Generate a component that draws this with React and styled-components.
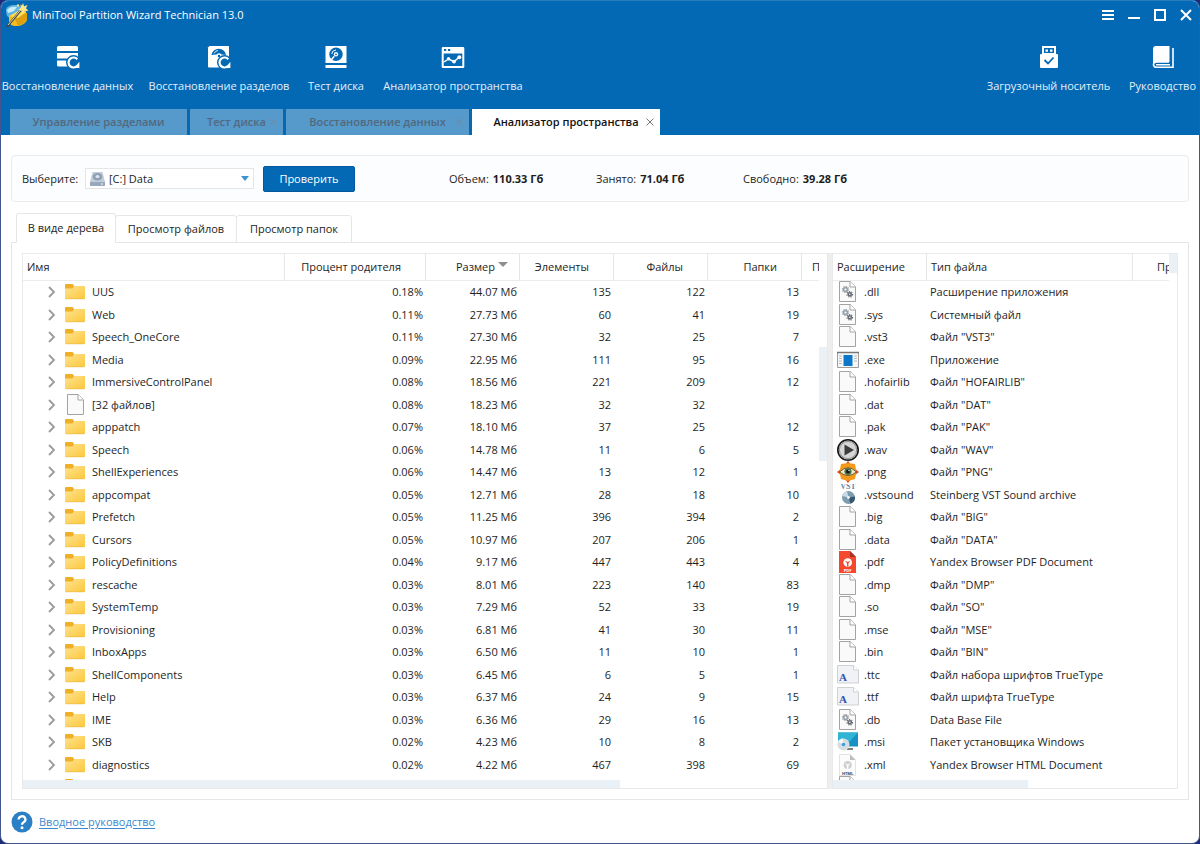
import React, { useState } from 'react';
import styled, { createGlobalStyle } from 'styled-components';

const GlobalStyle = createGlobalStyle`
  * {
    box-sizing: border-box;
  }

  body {
    margin: 0;
    background: #1c2a78;
    font-family: 'Open Sans', 'Noto Sans', sans-serif;
    font-size: 11px;
    line-height: 16px;
    color: #1e1e1e;
  }

  button, select {
    font: inherit;
    color: inherit;
    margin: 0;
    padding: 0;
    border: 0;
    background: none;
  }
`;

const Window = styled.div`
  display: flex;
  flex-direction: column;
  height: 100vh;
  border: 1px solid #45558f;
  border-top-color: #2a7cbd;
  border-radius: 8px;
  background: #fff;
  overflow: hidden;
`;

const Header = styled.header`
  background: #0469b5;
  color: #fff;
`;

const TitleBar = styled.div`
  display: flex;
  align-items: center;
  justify-content: space-between;
  height: 28px;
  padding: 0 6px 0 4px;
`;

const AppName = styled.h1`
  display: flex;
  align-items: center;
  gap: 3px;
  margin: 0;
  font-size: 11px;
  font-weight: 400;
`;

const WindowControls = styled.div`
  display: flex;
  gap: 12px;
`;

const ControlButton = styled.button`
  width: 14px;
  height: 14px;

  svg {
    display: block;
  }
`;

const Toolbar = styled.div`
  display: flex;
  justify-content: space-between;
  padding: 16px 4px 0;
  height: 80px;
`;

const ToolGroup = styled.div`
  display: flex;
  gap: 22px;
`;

const ToolButton = styled.button`
  display: flex;
  flex-direction: column;
  align-items: center;
  gap: 9px;
  width: ${props => props.$width}px;
  height: 49px;
  color: #e2effa;
  white-space: nowrap;

  svg {
    flex: none;
  }
`;

const TabBar = styled.div`
  display: flex;
  gap: 3px;
  padding: 0 9px;
`;

const Tab = styled.div`
  display: grid;
  grid-template-columns: 14px 1fr 14px;
  align-items: center;
  width: ${props => props.$width}px;
  height: 26px;
  background: ${props => (props.$active ? '#fff' : '#5699cb')};
  color: ${props => (props.$active ? '#111' : '#52697d')};
`;

const TabLabel = styled.button`
  grid-column: 2;
  font-weight: 600;
  white-space: nowrap;
`;

const TabClose = styled.button`
  width: 8px;
  height: 8px;
  color: ${props => (props.$active ? '#777' : '#6f8ba3')};

  svg {
    display: block;
  }
`;

const Main = styled.main`
  flex: 1;
  display: flex;
  flex-direction: column;
  min-height: 0;
  padding: 20px 10px 0;
`;

const DrivePanel = styled.form`
  display: flex;
  align-items: center;
  height: 47px;
  padding: 0 10px;
  border: 1px solid #e9ebec;
  border-radius: 4px;
  background: #fbfdfe;
`;

const DriveLabel = styled.label`
  width: 63px;
`;

const SelectBox = styled.div`
  display: flex;
  align-items: center;
  gap: 4px;
  width: 169px;
  height: 21px;
  margin-right: 9px;
  padding: 0 4px;
  border: 1px solid #e3e6e8;
  background: #fff;
`;

const DriveSelect = styled.select`
  flex: 1;
  appearance: none;
  outline: 0;
`;

const ScanButton = styled.button`
  width: 92px;
  height: 26px;
  border: 1px solid #02589b;
  border-radius: 2px;
  background: #0469b5;
  color: #fff;
`;

const Stats = styled.dl`
  display: flex;
  margin: 0 0 0 94px;
`;

const Stat = styled.div`
  display: flex;
  gap: 4px;
  width: 147px;

  dd {
    margin: 0;
    font-weight: 700;
  }
`;

const ViewTabs = styled.div`
  display: flex;
  align-items: flex-end;
  height: 30px;
  margin: 11px 0 -1px 5px;
  z-index: 1;
`;

const ViewTab = styled.button`
  width: ${props => props.$width}px;
  height: ${props => (props.$active ? 30 : 28)}px;
  margin-left: ${props => (props.$first ? 0 : -1)}px;
  padding-bottom: ${props => (props.$active ? 1 : 0)}px;
  border: 1px solid #e6e6e6;
  border-bottom-color: ${props => (props.$active ? '#fff' : '#e6e6e6')};
  border-radius: 3px 3px 0 0;
  background: #fff;
`;

const ViewPanel = styled.section`
  flex: 1;
  display: flex;
  min-height: 0;
  padding: 10px;
  border: 1px solid #e6e6e6;
`;

const Splitter = styled.div`
  width: 4px;
  background: #eee;
`;

const Pane = styled.div`
  flex: ${props => (props.$fixed ? `0 0 ${props.$fixed}px` : '1')};
  display: grid;
  grid-template-columns: minmax(0, 1fr) 8px;
  grid-template-rows: minmax(0, 1fr) 8px;
  min-width: 0;
  border: 1px solid #e9e9e9;
`;

const PaneBody = styled.div`
  overflow: hidden;
`;

const VerticalTrack = styled.div`
  padding-top: ${props => props.$offset}px;
`;

const VerticalThumb = styled.div`
  height: ${props => props.$size}px;
  background: #e9f0f6;
`;

const HorizontalThumb = styled.div`
  width: ${props => props.$size}%;
  background: #e9f0f6;
`;

const Table = styled.table`
  width: 100%;
  table-layout: fixed;
  border-collapse: separate;
  border-spacing: 0;
`;

const HeadCell = styled.th`
  width: ${props => (props.$width ? `${props.$width}px` : 'auto')};
  height: 27px;
  padding: ${props => (props.$numeric ? '0 24px 0 0' : `0 0 0 ${props.$indent || 4}px`)};
  border-bottom: 1px solid #ececec;
  border-left: ${props => (props.$first ? '0' : '1px solid #e6e6e6')};
  font-weight: 400;
  text-align: ${props => (props.$numeric ? 'right' : 'left')};
  white-space: nowrap;
  overflow: hidden;
`;

const HeadText = styled.span`
  display: inline-flex;
  gap: 3px;
`;

const SortMark = styled.svg`
  width: 10px;
  height: 10px;
  margin-right: -13px;
`;

const Row = styled.tr`
  height: 23px;

  &:nth-child(even) {
    height: 22px;
  }
`;

const Cell = styled.td`
  padding: 0 ${props => (props.$numeric ? 2 : 0)}px 0 ${props => props.$indent || 0}px;
  text-align: ${props => (props.$numeric ? 'right' : 'left')};
  vertical-align: top;
  line-height: 22px;
  white-space: nowrap;
`;

const NameContent = styled.div`
  display: flex;
  align-items: center;
  gap: 5px;
  height: 22px;

  svg {
    display: block;
    flex: none;
  }
`;

const Expander = styled.button`
  width: 12px;
  height: 12px;
`;

const Footer = styled.footer`
  display: flex;
  align-items: center;
  gap: 6px;
  height: 43px;
  padding-left: 10px;
`;

const GuideLink = styled.a`
  color: #3b88cf;
  text-decoration: underline;
  text-underline-offset: 2px;
`;

const folders = [
  ['UUS', '0.18%', '44.07 Мб', '135', '122', '13'],
  ['Web', '0.11%', '27.73 Мб', '60', '41', '19'],
  ['Speech_OneCore', '0.11%', '27.30 Мб', '32', '25', '7'],
  ['Media', '0.09%', '22.95 Мб', '111', '95', '16'],
  ['ImmersiveControlPanel', '0.08%', '18.56 Мб', '221', '209', '12'],
  ['[32 файлов]', '0.08%', '18.23 Мб', '32', '32', ''],
  ['apppatch', '0.07%', '18.10 Мб', '37', '25', '12'],
  ['Speech', '0.06%', '14.78 Мб', '11', '6', '5'],
  ['ShellExperiences', '0.06%', '14.47 Мб', '13', '12', '1'],
  ['appcompat', '0.05%', '12.71 Мб', '28', '18', '10'],
  ['Prefetch', '0.05%', '11.25 Мб', '396', '394', '2'],
  ['Cursors', '0.05%', '10.97 Мб', '207', '206', '1'],
  ['PolicyDefinitions', '0.04%', '9.17 Мб', '447', '443', '4'],
  ['rescache', '0.03%', '8.01 Мб', '223', '140', '83'],
  ['SystemTemp', '0.03%', '7.29 Мб', '52', '33', '19'],
  ['Provisioning', '0.03%', '6.81 Мб', '41', '30', '11'],
  ['InboxApps', '0.03%', '6.50 Мб', '11', '10', '1'],
  ['ShellComponents', '0.03%', '6.45 Мб', '6', '5', '1'],
  ['Help', '0.03%', '6.37 Мб', '24', '9', '15'],
  ['IME', '0.03%', '6.36 Мб', '29', '16', '13'],
  ['SKB', '0.02%', '4.23 Мб', '10', '8', '2'],
  ['diagnostics', '0.02%', '4.22 Мб', '467', '398', '69'],
  ['', '', '', '', '', ''],
];

const fileTypes = [
  ['gears', '.dll', 'Расширение приложения'],
  ['gears', '.sys', 'Системный файл'],
  ['blank', '.vst3', 'Файл "VST3"'],
  ['exe', '.exe', 'Приложение'],
  ['blank', '.hofairlib', 'Файл "HOFAIRLIB"'],
  ['blank', '.dat', 'Файл "DAT"'],
  ['blank', '.pak', 'Файл "PAK"'],
  ['play', '.wav', 'Файл "WAV"'],
  ['eye', '.png', 'Файл "PNG"'],
  ['vst', '.vstsound', 'Steinberg VST Sound archive'],
  ['blank', '.big', 'Файл "BIG"'],
  ['blank', '.data', 'Файл "DATA"'],
  ['pdf', '.pdf', 'Yandex Browser PDF Document'],
  ['blank', '.dmp', 'Файл "DMP"'],
  ['blank', '.so', 'Файл "SO"'],
  ['blank', '.mse', 'Файл "MSE"'],
  ['blank', '.bin', 'Файл "BIN"'],
  ['font', '.ttc', 'Файл набора шрифтов TrueType'],
  ['font', '.ttf', 'Файл шрифта TrueType'],
  ['gears', '.db', 'Data Base File'],
  ['msi', '.msi', 'Пакет установщика Windows'],
  ['html', '.xml', 'Yandex Browser HTML Document'],
  ['blank', '', ''],
];

function Logo() {
  return (
    <svg width="24" height="24" viewBox="0 0 24 24">
      <path d="M1 7c0-3 4-5 9-5 4 0 7 2 7 4l-5 8H3q-2-2-2-7z" fill="#5fb4e6" />
      <path d="M2 7c2-3 6-4 10-3l-3 4-6 2z" fill="#c9ecfb" />
      <path d="M4 13l8-4 9-1 1 9c-2 4-6 6-11 6-4 0-7-2-7-4z" fill="#f2bd1d" />
      <path d="M9 14l13-4v7c-2 3-5 5-9 5.500z" fill="#dfa010" />
      <path d="M5 13l8-5 8 1-8 6z" fill="#fbe15a" />
      <path d="M2.500 23L16 7" stroke="#4a4438" strokeWidth="2.200" strokeLinecap="round" />
      <path d="M3 22L16 6.500" stroke="#e9e4d4" strokeWidth=".9" />
      <path d="M18 0l1.100 3.200L22.500 2 21 5.200l2.500 2.600-3.700.2L18 11l-1.500-3.300L13 7l2.800-2.200L15.500 1.500 17 2.500z" fill="#fbe588" />
      <circle cx="13" cy="2.500" r="1.200" fill="#f7e27c" />
    </svg>
  );
}

function RefreshBadge() {
  return (
    <g>
      <circle cx="17.500" cy="17.500" r="7.500" fill="#0469b5" />
      <path d="M21.300 14.200a5 5 0 1 0 0 6.600" fill="none" stroke="#fff" strokeWidth="2.200" />
      <path d="M23.400 16.800v6.200h-5.200z" fill="#fff" />
    </g>
  );
}

const toolIcons = {
  data: (
    <g>
      <path d="M1 2.500Q1 1 2.500 1h18Q22 1 22 2.500V6H1z" fill="#fff" />
      <path d="M1 8h21v5.500H1zM1 15.500h21v6H2.500Q1 21.500 1 20z" fill="#fff" />
      <RefreshBadge />
    </g>
  ),
  partition: (
    <g>
      <path d="M2.500 1h19q.5 0 .5.500V21.500q0 1-1 1H2q-1 0-1-1v-19z" fill="#fff" />
      <path d="M4.500 10a7.300 7 0 0 1 14.500 0l-4.500-.5a3.500 3.500 0 0 0-5 0z" fill="#0469b5" />
      <path d="M7 8.500A5 5 0 0 1 11 5.500" fill="none" stroke="#fff" strokeWidth=".9" />
      <circle cx="12" cy="11" r="1.300" fill="#0469b5" />
      <RefreshBadge />
    </g>
  ),
  disk: (
    <g>
      <path d="M1.500 1h21v17h-21zM1.500 20h21v3h-21z" fill="#fff" />
      <circle cx="12" cy="9.300" r="6.700" fill="#0469b5" />
      <circle cx="12" cy="9.300" r="2.200" fill="#fff" />
      <circle cx="12" cy="9.300" r=".9" fill="#0469b5" />
      <path d="M7.700 9A4.400 4.400 0 0 1 12 5" fill="none" stroke="#fff" strokeWidth="1" />
      <path d="M6.800 15.500l3.400-4.300" stroke="#fff" strokeWidth="1.500" />
    </g>
  ),
  analyzer: (
    <g>
      <path
        fillRule="evenodd"
        d="M2 2h20q1.300 0 1.300 1.300v18.400q0 1.300-1.300 1.300H2Q.7 23 .7 21.700V3.300Q.7 2 2 2zM2.700 8.500v12.500h18.600v-12.500zM3 4v2h2.200V4zM7 4v2h2.200V4z"
        fill="#fff"
      />
      <path d="M3 17l4.500-3 5.500 2.500 5.500-4.500" fill="none" stroke="#fff" strokeWidth="1.500" />
      <circle cx="7.500" cy="13.800" r="1.700" fill="#fff" />
      <circle cx="13" cy="16.600" r="1.900" fill="#fff" />
      <circle cx="18.300" cy="12.200" r="2" fill="#fff" />
    </g>
  ),
  usb: (
    <g>
      <path
        fillRule="evenodd"
        d="M5 1h14v8h1q1 0 1 1v12q0 1-1 1H4q-1 0-1-1V10q0-1 1-1h1zM7 3v5h10V3z"
        fill="#fff"
      />
      <path d="M8.500 4.500h2.500v2.200H8.500zM13 4.500h2.500v2.200H13z" fill="#fff" />
      <path d="M7.500 15l3.500 3.500 5.500-6" fill="none" stroke="#0469b5" strokeWidth="1.800" />
    </g>
  ),
  book: (
    <g>
      <path d="M5 1h13.500v16H5.500q-2 0-3.500 1.500V4Q2 1 5 1z" fill="#fff" />
      <path d="M22 3v19.300H5.500A3 3 0 0 1 2.500 19.600q0-2.400 3-2.600H18" fill="none" stroke="#fff" strokeWidth="1.600" />
      <path d="M5 19.700h14" stroke="#fff" strokeWidth="1.400" />
    </g>
  ),
};

function Folder() {
  return (
    <svg width="22" height="22" viewBox="0 0 22 22">
      <defs>
        <linearGradient id="folder" x1="0" y1="0" x2="1" y2="1">
          <stop offset="0" stopColor="#ffe391" />
          <stop offset="1" stopColor="#fcc83c" />
        </linearGradient>
      </defs>
      <path d="M0 4q0-1 1-1h6q1 0 1.500 1l.5 1h10q1 0 1 1v2H0z" fill="#efb027" />
      <path d="M0 7.500h7.500L9 5h10.500q.5 0 .5.600V17q0 1-1 1H1q-1 0-1-1z" fill="url(#folder)" />
      <path d="M.5 17.800h19" stroke="#eab63c" strokeWidth=".6" />
    </svg>
  );
}

function Gear({ x, y, r, color }) {
  return (
    <g fill="none" stroke={color}>
      <circle cx={x} cy={y} r={r} strokeWidth="1.600" />
      <circle cx={x} cy={y} r={r + 1.200} strokeWidth="1.100" strokeDasharray="1.200 1.200" />
    </g>
  );
}

function Page({ children }) {
  return (
    <g>
      <path d="M2.500.5h10.700l5.300 5.300v14.700h-16z" fill="#fafafa" stroke="#a3a3a3" />
      <path d="M13 .5v5.500h5.500" fill="#fff" stroke="#a3a3a3" />
      {children}
    </g>
  );
}

const fileIcons = {
  blank: <Page />,
  gears: (
    <Page>
      <Gear x={8.500} y={8.500} r={1.900} color="#9aa3ab" />
      <Gear x={12.800} y={13.300} r={1.600} color="#656c73" />
    </Page>
  ),
  exe: (
    <g>
      <path d="M.5 3.500h21v15H.5z" fill="#f7f7f7" stroke="#9d9d9d" />
      <path d="M0 3.500h22" stroke="#777" strokeWidth="1.500" />
      <path d="M6.500 6h9v11h-9z" fill="#0c76c8" />
      <path d="M2 7h3M2 9.500h3M2 12h3M2 14.500h3M17 7h3M17 9.500h3M17 12h3" stroke="#bbb" />
    </g>
  ),
  play: (
    <g>
      <circle cx="11" cy="11" r="10.200" fill="#d6d6d6" stroke="#161616" strokeWidth="1.600" />
      <circle cx="11" cy="11" r="8.600" fill="none" stroke="#8f8f8f" />
      <path d="M7.500 5.500L17 11l-9.500 5.500z" fill="#3c3c3c" />
    </g>
  ),
  eye: (
    <g>
      <path d="M11 0l3 4h-6zM11 22l3-4h-6zM0 11l4-3v6zM22 11l-4-3v6z" fill="#dc3d1e" />
      <path d="M4 3l7-1 7 1 1.500 8L18 18l-7 2-7-2-1.500-7z" fill="#f39a1c" />
      <path d="M2.500 11Q11 2.500 19.500 11 11 18 2.500 11z" fill="#efe9cf" stroke="#5b4a20" strokeWidth=".9" />
      <circle cx="11" cy="10.500" r="3.600" fill="#507747" />
      <circle cx="11" cy="10.500" r="2" fill="#171717" />
      <circle cx="12" cy="9.500" r=".7" fill="#fff" />
    </g>
  ),
  vst: (
    <g>
      <text x="11" y="5" textAnchor="middle" fontSize="8" fontFamily="Liberation Serif, serif" fontWeight="700" fill="#6b8ba8">
        VST
      </text>
      <circle cx="11.500" cy="13.500" r="6.500" fill="#7f9db1" />
      <path d="M11.500 13.500L5.500 12A6.500 6.500 0 0 1 10 7.200z" fill="#c7dae5" />
      <path d="M11.500 13.500l6.400-1a6.500 6.500 0 0 1-4.400 7.200z" fill="#39586f" />
      <circle cx="11.500" cy="13.500" r="1.400" fill="#edf4f8" />
    </g>
  ),
  pdf: (
    <g>
      <path d="M2 0h11l6 6v16H2z" fill="#f5492f" />
      <path d="M13 0v6h6z" fill="#a93122" />
      <circle cx="10.700" cy="11.500" r="4.300" fill="#fff" />
      <path d="M8 9.500l2.700 1.500 2.700-1.500-2 3v3h-1.400v-3z" fill="#f5492f" />
      <text x="10.500" y="20.500" textAnchor="middle" fontSize="4" fontWeight="700" fill="#fff">
        PDF
      </text>
    </g>
  ),
  font: (
    <g>
      <path d="M.5 1.500h16l5 4.500v13H.5z" fill="#f1f2f5" stroke="#cfd1d4" />
      <path d="M16.500 1.500V6h5" fill="#fff" stroke="#cfd1d4" />
      <text x="2" y="17" fontSize="11" fontFamily="Liberation Serif, serif" fontWeight="700" fill="#2a55b5">
        A
      </text>
    </g>
  ),
  msi: (
    <g>
      <path d="M1 1.500h20v14H1z" fill="#1791c4" />
      <path d="M1 1.500h20L8 15.500H1z" fill="#2fb4d6" />
      <path d="M10 18h6" stroke="#555" strokeWidth="1.500" />
      <circle cx="6.500" cy="13.500" r="6" fill="#d4dde2" />
      <path d="M6.500 13.500L1 11a6 6 0 0 1 5-3.500z" fill="#f4f8fa" />
      <circle cx="6.500" cy="13.500" r="1.800" fill="#3f9fd8" />
    </g>
  ),
  html: (
    <g>
      <path d="M2.500.5H13l5.500 5.500v15.500h-16z" fill="#fcfcfc" stroke="#e3e3e3" />
      <path d="M13 .5V6h5.500z" fill="#bdbdbd" />
      <circle cx="10.700" cy="11" r="4" fill="#cfcfcf" />
      <path d="M8 9l2.700 1.500L13.400 9l-2 3v3H10v-3z" fill="#fff" />
      <text x="10.600" y="20.500" textAnchor="middle" fontSize="4" fontWeight="700" fill="#444">
        HTML
      </text>
    </g>
  ),
};

function FileIcon({ type }) {
  return (
    <svg width="22" height="22" viewBox="0 0 22 22">
      {fileIcons[type]}
    </svg>
  );
}

function Tool({ icon, label, width }) {
  return (
    <ToolButton type="button" $width={width}>
      <svg width="24" height="24" viewBox="0 0 24 24">
        {toolIcons[icon]}
      </svg>
      <span>{label}</span>
    </ToolButton>
  );
}

function AppTab({ label, width, active, closable }) {
  return (
    <Tab $width={width} $active={active}>
      <TabLabel type="button">{label}</TabLabel>
      {closable && (
        <TabClose type="button" aria-label={`Закрыть ${label}`} $active={active}>
          <svg width="8" height="8" viewBox="0 0 8 8">
            <path d="M.5.5l7 7M7.500.5l-7 7" stroke="currentColor" />
          </svg>
        </TabClose>
      )}
    </Tab>
  );
}

function TitleControls() {
  return (
    <WindowControls>
      <ControlButton type="button" aria-label="Меню">
        <svg width="14" height="14" viewBox="0 0 14 14">
          <path d="M1 3h12M1 7h12M1 11h12" stroke="#fff" strokeWidth="2" />
        </svg>
      </ControlButton>
      <ControlButton type="button" aria-label="Свернуть">
        <svg width="14" height="14" viewBox="0 0 14 14">
          <path d="M1 10h12" stroke="#fff" strokeWidth="2" />
        </svg>
      </ControlButton>
      <ControlButton type="button" aria-label="Развернуть">
        <svg width="14" height="14" viewBox="0 0 14 14">
          <path d="M2 2h10v10H2z" fill="none" stroke="#fff" strokeWidth="2" />
        </svg>
      </ControlButton>
      <ControlButton type="button" aria-label="Закрыть">
        <svg width="14" height="14" viewBox="0 0 14 14">
          <path d="M2 2l10 10M12 2L2 12" stroke="#fff" strokeWidth="2" />
        </svg>
      </ControlButton>
    </WindowControls>
  );
}

function FolderTable() {
  return (
    <Table>
      <thead>
        <tr>
          <HeadCell $first>Имя</HeadCell>
          <HeadCell $width={141} $numeric>Процент родителя</HeadCell>
          <HeadCell $width={94} $numeric>
            <HeadText>
              Размер
              <SortMark viewBox="0 0 10 10">
                <path d="M0 3h10L5 8z" fill="#8f8f8f" />
              </SortMark>
            </HeadText>
          </HeadCell>
          <HeadCell $width={94} $numeric>Элементы</HeadCell>
          <HeadCell $width={94} $numeric>Файлы</HeadCell>
          <HeadCell $width={94} $numeric>Папки</HeadCell>
          <HeadCell $width={18} $indent={10}>П</HeadCell>
        </tr>
      </thead>
      <tbody>
        {folders.map(([name, ...values], index) => (
          <Row key={index}>
            <Cell $indent={25}>
              <NameContent>
                <Expander type="button" aria-label={`Развернуть ${name}`}>
                  <svg width="12" height="12" viewBox="0 0 12 12">
                    <path d="M1 1l5 5-5 5" fill="none" stroke="#9b9b9b" strokeWidth="1.800" />
                  </svg>
                </Expander>
                {name.startsWith('[') ? <FileIcon type="blank" /> : <Folder />}
                {name}
              </NameContent>
            </Cell>
            {values.map((value, column) => (
              <Cell key={column} $numeric>{value}</Cell>
            ))}
          </Row>
        ))}
      </tbody>
    </Table>
  );
}

function ExtensionTable() {
  return (
    <Table>
      <thead>
        <tr>
          <HeadCell $width={93} $first>Расширение</HeadCell>
          <HeadCell>Тип файла</HeadCell>
          <HeadCell $width={37} $indent={24}>Пр</HeadCell>
        </tr>
      </thead>
      <tbody>
        {fileTypes.map(([icon, extension, description], index) => (
          <Row key={index}>
            <Cell $indent={4}>
              <NameContent>
                <FileIcon type={icon} />
                {extension}
              </NameContent>
            </Cell>
            <Cell $indent={4}>{description}</Cell>
          </Row>
        ))}
      </tbody>
    </Table>
  );
}

function App() {
  const [view, setView] = useState('tree');
  const views = [
    ['tree', 'В виде дерева', 100],
    ['files', 'Просмотр файлов', 122],
    ['folders', 'Просмотр папок', 116],
  ];

  return (
    <Window>
      <GlobalStyle />
      <Header>
        <TitleBar>
          <AppName>
            <Logo />
            MiniTool Partition Wizard Technician 13.0
          </AppName>
          <TitleControls />
        </TitleBar>
        <Toolbar>
          <ToolGroup>
            <Tool icon="data" label="Восстановление данных" width={125} />
            <Tool icon="partition" label="Восстановление разделов" width={134} />
            <Tool icon="disk" label="Тест диска" width={56} />
            <Tool icon="analyzer" label="Анализатор пространства" width={134} />
          </ToolGroup>
          <ToolGroup>
            <Tool icon="usb" label="Загрузочный носитель" width={119} />
            <Tool icon="book" label="Руководство" width={65} />
          </ToolGroup>
        </Toolbar>
        <TabBar>
          <AppTab label="Управление разделами" width={177} />
          <AppTab label="Тест диска" width={93} closable />
          <AppTab label="Восстановление данных" width={183} closable />
          <AppTab label="Анализатор пространства" width={188} active closable />
        </TabBar>
      </Header>
      <Main>
        <DrivePanel onSubmit={event => event.preventDefault()}>
          <DriveLabel htmlFor="drive">Выберите:</DriveLabel>
          <SelectBox>
            <svg width="15" height="16" viewBox="0 0 15 16">
              <path d="M2.500 1h10L15 11v3q0 1-1 1H1q-1 0-1-1v-3z" fill="#c3ccd8" />
              <path d="M0 11h15v3q0 1-1 1H1q-1 0-1-1z" fill="#98a9be" />
              <ellipse cx="7.500" cy="5.800" rx="4.800" ry="3.800" fill="#8ca1b8" />
              <ellipse cx="7.500" cy="5.500" rx="2" ry="1.500" fill="#dfe6ee" />
              <path d="M11 13h2" stroke="#fff" />
            </svg>
            <DriveSelect id="drive">
              <option>[C:] Data</option>
            </DriveSelect>
            <svg width="8" height="5" viewBox="0 0 8 5">
              <path d="M0 0h8L4 5z" fill="#3f93d0" />
            </svg>
          </SelectBox>
          <ScanButton type="submit">Проверить</ScanButton>
          <Stats>
            <Stat>
              <dt>Объем:</dt>
              <dd>110.33 Гб</dd>
            </Stat>
            <Stat>
              <dt>Занято:</dt>
              <dd>71.04 Гб</dd>
            </Stat>
            <Stat>
              <dt>Свободно:</dt>
              <dd>39.28 Гб</dd>
            </Stat>
          </Stats>
        </DrivePanel>
        <ViewTabs>
          {views.map(([id, label, width], index) => (
            <ViewTab
              key={id}
              type="button"
              $width={width}
              $first={index === 0}
              $active={view === id}
              onClick={() => setView(id)}
            >
              {label}
            </ViewTab>
          ))}
        </ViewTabs>
        <ViewPanel>
          <Pane>
            <PaneBody>
              <FolderTable />
            </PaneBody>
            <VerticalTrack $offset={93}>
              <VerticalThumb $size={114} />
            </VerticalTrack>
            <HorizontalThumb $size={75} />
          </Pane>
          <Splitter />
          <Pane $fixed={346}>
            <PaneBody>
              <ExtensionTable />
            </PaneBody>
            <VerticalTrack $offset={0}>
              <VerticalThumb $size={19} />
            </VerticalTrack>
            <HorizontalThumb $size={58} />
          </Pane>
        </ViewPanel>
      </Main>
      <Footer>
        <svg width="22" height="22" viewBox="0 0 22 22">
          <circle cx="11" cy="11" r="10.500" fill="#2b7fc4" />
          <path d="M7.600 8.500a3.400 3.200 0 1 1 5 2.800q-1.600.9-1.600 2.400" fill="none" stroke="#fff" strokeWidth="2.300" />
          <circle cx="11" cy="16.800" r="1.500" fill="#fff" />
        </svg>
        <GuideLink href="#guide">Вводное руководство</GuideLink>
      </Footer>
    </Window>
  );
}

export default App;
